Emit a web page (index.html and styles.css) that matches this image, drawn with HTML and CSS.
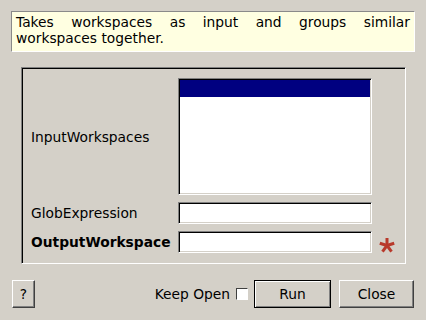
FILE: index.html
```html
<!DOCTYPE html>
<html>
<head>
<meta charset="utf-8">
<link rel="stylesheet" href="styles.css">
</head>
<body>
<div class="desc">Takes workspaces as input and groups similar workspaces together.</div>
<div class="frame">
  <div class="lbl tall">InputWorkspaces</div>
  <div class="list"><div class="sel"></div></div>
  <div></div>
  <div class="lbl">GlobExpression</div>
  <div class="input"></div>
  <div></div>
  <div class="lbl bold">OutputWorkspace</div>
  <div class="input"></div>
  <div class="star">
    <svg width="16" height="16" viewBox="0 0 16 16">
      <g stroke="#b8392b" stroke-width="3" stroke-linecap="butt">
        <line x1="8" y1="8.5" x2="8" y2="1"/>
        <line x1="8" y1="8.5" x2="15.2" y2="6.2"/>
        <line x1="8" y1="8.5" x2="12.5" y2="14.6"/>
        <line x1="8" y1="8.5" x2="3.5" y2="14.6"/>
        <line x1="8" y1="8.5" x2="0.8" y2="6.2"/>
      </g>
    </svg>
  </div>
</div>
<div class="bar">
  <button class="btn help">?</button>
  <div class="spacer"></div>
  <span class="keep">Keep Open</span>
  <span class="check"></span>
  <button class="btn run">Run</button>
  <button class="btn close">Close</button>
</div>
</body>
</html>
```
FILE: styles.css
```css
html, body {
  margin: 0;
  padding: 0;
  background: #d4d0c8;
  font-family: "DejaVu Sans", sans-serif;
  font-size: 13.8px;
  color: #000;
  width: 426px;
  height: 320px;
  overflow: hidden;
}
.desc {
  margin: 11px 11px 0 11px;
  background: #ffffe1;
  border-top: 1px solid #8a8a8a;
  border-left: 1px solid #8a8a8a;
  border-right: 1px solid #ffffff;
  border-bottom: 1px solid #ffffff;
  padding: 2px 4px 0 4px;
  text-align: justify;
  text-align-last: left;
  line-height: 16px;
  height: 37px;
  width: 394px;
  box-sizing: content-box;
}
.frame {
  margin: 15px 0 0 21px;
  width: 385px;
  height: 197px;
  box-sizing: border-box;
  border-top: 1px solid #808080;
  border-left: 1px solid #808080;
  border-right: 1px solid #ffffff;
  border-bottom: 1px solid #ffffff;
  box-shadow: inset 1px 1px 0 #000000, inset -1px -1px 0 #d4d0c8;
  padding: 10px 0 0 9px;
  display: grid;
  grid-template-columns: 147px 194px 1fr;
  grid-template-rows: 117px 22px 22px;
  row-gap: 7px;
  align-items: center;
}
.lbl { white-space: nowrap; }
.bold { font-weight: bold; }
.list, .input {
  box-sizing: border-box;
  background: #fff;
  border-top: 1px solid #808080;
  border-left: 1px solid #808080;
  border-right: 1px solid #ffffff;
  border-bottom: 1px solid #ffffff;
  box-shadow: inset 1px 1px 0 #000, inset -1px -1px 0 #d4d0c8;
  height: 100%;
  width: 194px;
}
.list { padding: 1px 1px 0 1px; }
.sel { height: 17px; background: #000080; }
.star { padding-left: 7px; padding-top: 5px; display: flex; }
.bar {
  display: flex;
  align-items: center;
  margin: 16px 12px 0 12px;
  height: 28px;
}
.spacer { flex: 1; }
.btn {
  font-family: "DejaVu Sans", sans-serif;
  font-size: 13.8px;
  color: #000;
  background: #d4d0c8;
  height: 28px;
  box-sizing: border-box;
  border-top: 1px solid #ffffff;
  border-left: 1px solid #ffffff;
  border-right: 1px solid #404040;
  border-bottom: 1px solid #404040;
  box-shadow: inset -1px -1px 0 #808080;
  padding: 0;
  margin: 0;
}
.help { width: 23px; height: 28px; }
.keep { margin-right: 6px; }
.check {
  width: 12px;
  height: 12px;
  box-sizing: border-box;
  background: #fff;
  border-top: 1px solid #404040;
  border-left: 1px solid #404040;
  border-right: 1px solid #ffffff;
  border-bottom: 1px solid #ffffff;
  margin-right: 6px;
}
.run {
  width: 77px;
  border: 1px solid #000;
  box-shadow: inset 1px 1px 0 #ffffff, inset -1px -1px 0 #808080;
}
.close { width: 75px; margin-left: 8px; }
```
